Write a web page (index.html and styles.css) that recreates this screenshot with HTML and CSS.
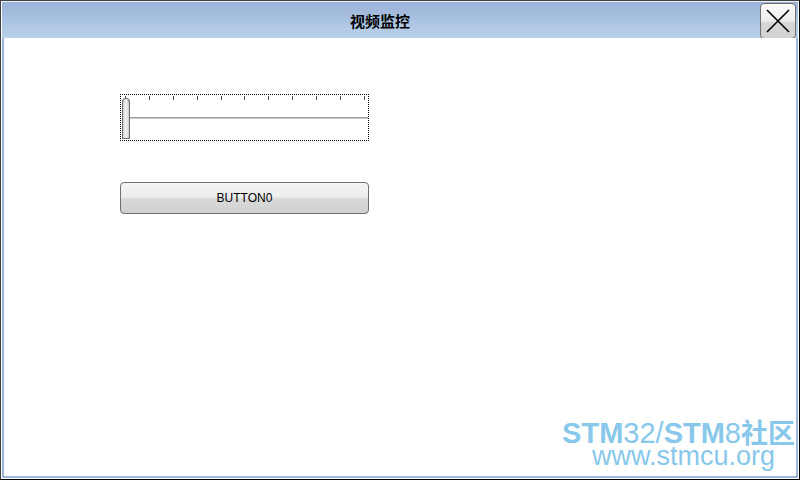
FILE: index.html
```html
<!DOCTYPE html>
<html lang="zh-CN">
<head>
    <meta charset="UTF-8">
    <title>视频监控</title>
    <link rel="stylesheet" href="styles.css">
</head>
<body>

<div class="window">
    <div class="frame">
        <!-- 标题栏 -->
        <div class="caption">
            <div class="title">视频监控</div>
            <div class="close">
                <svg width="26" height="26" viewBox="0 0 26 26">
                    <path d="M2 2 L24 24 M24 2 L2 24" stroke="#000" stroke-width="1.6" fill="none"/>
                </svg>
            </div>
        </div>

        <!-- 客户区 -->
        <div class="client">
            <div class="slider">
                <div class="ticks">
                    <span></span><span></span><span></span><span></span><span></span><span></span>
                    <span></span><span></span><span></span><span></span><span></span>
                </div>
                <div class="track"></div>
                <div class="thumb"></div>
            </div>

            <div class="button">BUTTON0</div>

            <div class="logo">
                <div class="logo-top"><b>STM</b>32/<b>STM</b>8<b class="cn">社区</b></div>
                <div class="logo-url">www.stmcu.org</div>
            </div>
        </div>
    </div>
</div>

</body>
</html>
```

FILE: styles.css
```css
* {
    padding: 0;
    margin: 0;
    box-sizing: border-box;
}
body {
    width: 800px;
    height: 480px;
    overflow: hidden;
    background: #fff;
    font-family: "Liberation Sans", "Noto Sans CJK SC", sans-serif;
}
.window {
    width: 800px;
    height: 480px;
    border: 1px solid #000;
    border-top-color: #404040;
    border-left-color: #404040;
}
.frame {
    height: 100%;
    display: flex;
    flex-direction: column;
    border: 1px solid #fff;
    border-top: none;
    background: #9db5da;
    padding: 0 2px 2px 2px;
}
.caption {
    height: 37px;
    display: flex;
    align-items: center;
    background: linear-gradient(#9cb3d8, #a6bedf 40%, #b3cbe7 75%, #b7d0ea);
    border-top: 1px solid #eef2f8;
    margin: 0 -2px;
    padding: 0 2px;
}
.caption .title {
    flex: 1;
    text-align: center;
    font-family: "Noto Sans CJK SC", sans-serif;
    font-size: 15px;
    font-weight: 700;
    color: #000;
    padding-right: 4px;
}
.caption .close {
    width: 36px;
    height: 36px;
    margin-top: 1px;
    display: flex;
    align-items: center;
    justify-content: center;
    border: 1px solid #707070;
    border-radius: 4px;
    background: linear-gradient(#fbfbfb, #ededed 50%, #d6d6d6 55%, #d3d3d3);
}
.client {
    flex: 1;
    position: relative;
    background: #fff;
    padding: 56px 0 0 116px;
}
.slider {
    width: 249px;
    height: 47px;
    position: relative;
    border: 1px dotted #000;
}
.slider .ticks {
    height: 4px;
    margin-top: 1px;
    padding: 0 3px 0 4px;
    display: flex;
    justify-content: space-between;
}
.slider .ticks span {
    width: 1px;
    height: 4px;
    background: #505050;
}
.slider .track {
    height: 2px;
    margin: 17px 0 0 8px;
    background: #a0a0a0;
    border-bottom: 1px solid #c8c8c8;
}
.slider .thumb {
    position: absolute;
    left: 1px;
    top: 3px;
    width: 8px;
    height: 41px;
    border: 1px solid #6f6f6f;
    border-top: none;
    border-radius: 4px 4px 0 0;
    background: linear-gradient(90deg, #d0d0d0, #f6f6f6 50%, #c8c8c8);
    box-shadow: inset 0 1px 0 #6f6f6f;
}
.button {
    width: 249px;
    height: 32px;
    margin-top: 41px;
    line-height: 30px;
    text-align: center;
    font-size: 12px;
    color: #000;
    border: 1px solid #6f6f6f;
    border-radius: 4px;
    background: linear-gradient(#f2f5f2, #ededed 45%, #d9d9d9 55%, #d0d0d0);
}
.logo {
    position: absolute;
    right: 1px;
    bottom: 10px;
    color: #88c8eb;
    text-align: right;
}
.logo-top {
    font-size: 29px;
    line-height: 26px;
    white-space: nowrap;
}
.logo-top b {
    font-weight: 700;
}
.logo-top .cn {
    font-family: "Noto Sans CJK SC", sans-serif;
    font-size: 27px;
}
.logo-url {
    font-size: 27px;
    line-height: 20px;
    padding-right: 20px;
}
```
